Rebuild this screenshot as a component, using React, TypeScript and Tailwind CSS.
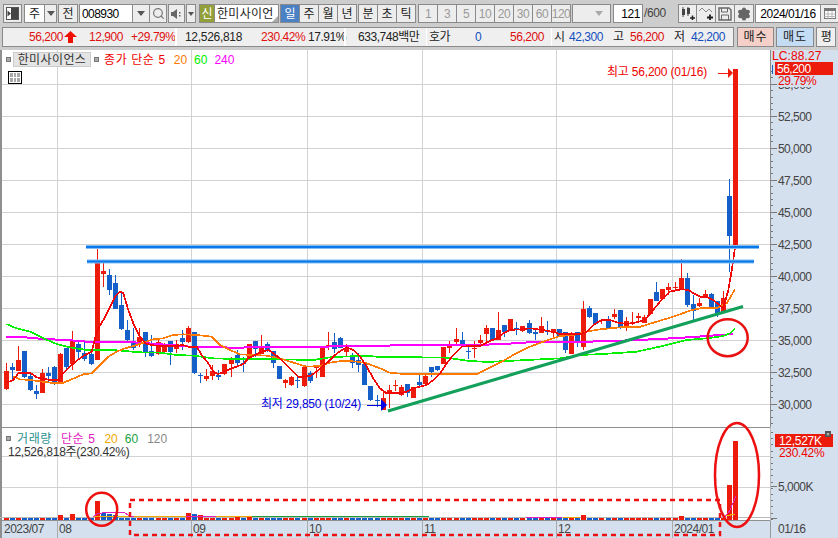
import { Search, Settings } from "lucide-react";

const RED = "#ec1b0b";
const BLUE = "#1460c8";

// candles read off the chart: x, body top, body bottom, wick top, wick bottom, r/b
type C = [number, number, number, number, number, string];

const z3: C[] = [
  [19,393,447,370,450,"r"],[37,381,389,370,420,"b"],[55,360,392,318,392,"r"],[73,333,410,333,415,"b"],
  [91,408,450,400,453,"b"],[109,453,461,435,476,"b"],[127,400,458,388,458,"r"],[145,400,408,380,425,"b"],
  [163,381,429,378,435,"b"],[181,342,429,340,433,"r"],[199,324,381,324,390,"b"],[217,300,372,273,390,"r"],
  [235,312,336,305,355,"b"],[253,339,357,300,362,"b"],[274,342,372,340,375,"b"],[292,70,360,28,360,"r"],
  [310,93,102,70,140,"r"],[328,105,150,88,165,"b"],[346,129,207,105,207,"b"],[364,195,267,155,270,"b"],
  [382,270,300,240,310,"b"],[400,303,324,264,330,"b"],[418,291,312,265,320,"r"],[436,276,336,276,352,"b"],
  [454,333,348,285,352,"b"],[475,306,342,300,345,"r"],[493,312,336,310,340,"r"],[511,303,336,303,375,"b"],
  [529,312,327,300,340,"r"],[547,294,306,270,330,"b"],[565,264,306,258,310,"r"],[583,276,400,276,402,"b"],
  [601,404,406,400,430,"b"],[619,408,416,388,422,"r"],[637,393,408,375,420,"r"],[655,405,410,390,420,"b"],
  [673,372,402,372,405,"r"],[694,357,372,350,410,"r"],[712,345,369,330,375,"b"],[730,369,371,350,395,"b"],
  [748,312,354,312,360,"r"],[766,303,326,303,352,"b"],[784,318,342,285,342,"r"],[802,312,330,305,335,"b"],
  [820,333,369,333,385,"b"],[838,378,417,378,417,"b"],
];
const z4: C[] = [
  [16,420,428,416,445,"r"],[34,411,435,408,437,"r"],[52,420,422,410,445,"b"],[72,381,438,381,440,"r"],
  [90,400,423,392,430,"b"],[108,380,384,380,415,"r"],[127,318,410,318,410,"r"],[145,315,318,277,330,"r"],
  [163,306,327,280,340,"b"],[181,294,324,290,325,"b"],[199,325,335,313,352,"r"],[217,345,369,338,385,"b"],
  [235,360,375,340,395,"b"],[253,372,435,372,435,"b"],[271,438,480,438,482,"b"],[292,480,482,465,500,"b"],
  [310,475,510,450,510,"r"],[328,450,460,435,503,"r"],[346,436,438,420,452,"r"],[364,441,465,435,467,"r"],
  [382,432,458,432,470,"b"],[400,441,473,441,473,"r"],[418,426,435,405,438,"b"],[436,408,432,400,435,"r"],
  [454,381,396,381,412,"b"],[472,378,390,378,392,"b"],[490,321,372,321,372,"r"],[508,318,324,302,340,"r"],
  [529,297,305,265,315,"r"],[547,300,318,277,322,"b"],[565,334,336,318,357,"b"],[583,324,326,303,355,"r"],
  [601,300,308,285,318,"r"],[619,264,282,255,315,"r"],[637,264,300,264,303,"b"],[655,270,300,216,300,"r"],
  [673,255,276,255,290,"b"],[691,237,270,237,272,"r"],[709,264,267,246,285,"b"],[727,259,272,259,275,"r"],
  [748,250,279,240,281,"b"],[766,276,281,265,300,"b"],[784,258,279,232,279,"r"],[802,270,276,243,285,"b"],
  [820,268,280,268,290,"r"],
];
const z5: C[] = [
  [-2,268,290,268,290,"b"],[16,277,330,277,340,"b"],[34,285,342,275,342,"r"],[52,276,305,276,320,"b"],
  [70,207,322,183,330,"r"],[88,204,230,197,235,"b"],[106,219,252,219,255,"b"],[124,240,243,240,252,"r"],
  [145,240,264,228,268,"b"],[163,223,231,208,238,"r"],[181,210,264,210,266,"b"],[199,243,264,232,272,"r"],
  [217,245,247,215,255,"r"],[235,228,234,220,245,"r"],[253,230,249,225,250,"r"],[271,177,222,177,224,"r"],
  [289,156,183,126,183,"b"],[307,147,177,147,180,"r"],[325,141,150,130,165,"r"],[346,141,145,125,150,"r"],
  [364,114,150,57,150,"r"],[382,114,195,99,200,"b"],[400,192,213,165,240,"b"],[418,189,198,175,200,"r"],
  [436,162,168,150,175,"r"],[454,162,204,160,205,"b"],[472,183,219,183,232,"b"],[490,174,215,152,215,"r"],
];
const candles: C[] = [
  ...z3.map(([x, a, b, c, d, k]): C => [Math.floor(x / 3), 240 + a / 3, 240 + b / 3, 240 + c / 3, 240 + d / 3, k]),
  ...z4.map(([x, a, b, c, d, k]): C => [280 + Math.floor(x / 3), 240 + a / 3, 240 + b / 3, 240 + c / 3, 240 + d / 3, k]),
  ...z5.map(([x, a, b, c, d, k]): C => [560 + Math.floor(x / 3), 240 + a / 3, 240 + b / 3, 240 + c / 3, 240 + d / 3, k]),
  [729, 196, 236, 179, 272, "b"],
  [735, 69, 248, 69, 250, "r"],
];

function pts(off: number, list: number[][]) {
  return list.map(([x, y]) => `${off + x / 3},${240 + y / 3}`).join(" ");
}

const ma5 = [
  pts(0, [[19,428],[40,420],[55,400],[75,398],[90,398],[110,412],[130,416],[150,420],[175,420],[190,400],[215,375],[235,358],[255,345],[275,335],[292,270],[310,240],[330,200],[345,170],[360,155],[370,160],[385,210],[400,250],[420,290],[436,310],[455,315],[475,318],[500,318],[530,318],[547,315],[565,320],[590,320],[605,345],[625,370],[640,395],[655,402],[675,395],[695,385],[715,378],[730,372],[745,355],[765,345],[785,335],[805,330],[820,340]]),
  pts(280, [[0,355],[20,375],[40,395],[55,410],[70,410],[90,408],[110,395],[125,380],[145,365],[165,345],[185,330],[200,322],[220,330],[240,350],[260,380],[280,415],[300,445],[320,460],[360,460],[380,455],[400,445],[420,440],[440,435],[460,420],[480,400],[500,370],[520,345],[545,320],[570,318],[600,318],[625,305],[650,295],[670,280],[690,270],[720,268],[750,265],[790,270],[830,278]]),
  pts(560, [[0,283],[30,283],[60,283],[80,275],[100,255],[125,240],[150,240],[175,248],[200,252],[225,248],[255,240],[275,215],[300,185],[330,155],[365,148],[385,150],[400,160],[420,170],[440,170],[460,180],[490,205],[505,150],[512,110],[520,60],[525,20],[528,0]]),
].join(" ");
const ma20 = [
  pts(0, [[40,410],[60,418],[90,420],[120,424],[150,428],[190,428],[215,418],[250,403],[275,400],[300,375],[325,350],[350,335],[375,325],[400,318],[430,308],[460,298],[490,295],[520,285],[550,283],[590,285],[635,290],[660,315],[690,330],[720,343],[760,345],[800,347]]),
  pts(280, [[0,355],[40,368],[80,380],[120,378],[150,368],[190,362],[230,365],[260,370],[300,385],[330,398],[370,402],[420,402],[500,402],[590,402],[610,392],[660,368],[700,345],[750,320],[790,305]]),
  pts(560, [[0,288],[40,285],[80,275],[120,268],[180,262],[235,262],[290,245],[340,230],[390,212],[420,205],[470,205],[500,190],[525,148]]),
].join(" ");
const ma60 = [
  pts(0, [[19,252],[50,265],[90,275],[130,295],[170,312],[210,322],[260,330],[340,330],[420,337],[480,338],[530,345],[580,347],[640,355],[700,357],[800,358]]),
  pts(280, [[0,358],[100,360],[150,352],[250,347],[290,350],[420,352],[500,353],[560,362],[620,366],[780,358]]),
  pts(560, [[0,355],[60,345],[130,342],[230,335],[290,322],[340,310],[380,300],[440,295],[490,288],[510,280],[525,265]]),
].join(" ");
const ma240 = [
  pts(0, [[19,290],[75,292],[130,297],[200,300],[260,305],[400,307],[470,312],[570,320],[700,323]]),
  pts(280, [[0,321],[120,320],[360,316],[560,316],[670,312],[760,306]]),
  pts(560, [[0,307],[160,303],[300,297],[400,291],[520,282]]),
].join(" ");

const gridX = [57, 191, 307, 422, 556, 672];
const gridY = [84, 116, 148, 180, 212, 244, 276, 308, 340, 372, 404];
const axisLabels = ["55,000", "52,500", "50,000", "47,500", "45,000", "42,500", "40,000", "37,500", "35,000", "32,500", "30,000"];

const volTall: Record<number, [number, string]> = {
  60: [515, "r"], 72: [514, "r"], 97: [501, "r"], 103: [513, "b"], 109: [514, "b"], 115: [515, "b"],
  188: [513, "r"], 194: [514, "b"], 200: [515, "r"], 237: [516, "r"], 249: [516, "r"],
  583: [515, "r"], 681: [516, "r"], 729: [485, "r"], 735: [441, "r"],
};

const numFont = "font-['Liberation_Sans','Noto_Sans_CJK_KR',sans-serif]";

function Btn({ className, tone = "justify-center bg-[#ededed] text-[#222]", children }: { className: string; tone?: string; children?: React.ReactNode }) {
  return (
    <div className={`flex h-[19px] shrink-0 items-center border border-[#8a8a8a] text-[12px] ${tone} ${className}`}>
      {children}
    </div>
  );
}

function Arrow() {
  return <span className="h-0 w-0 border-x-[4px] border-t-[5px] border-x-transparent border-t-[#555]" />;
}

function MainPlot() {
  return (
    <div className="relative h-[377px] w-[770px] shrink-0 bg-white">
      <svg width={770} height={377} viewBox="0 50 770 377" className="block">
        <g shapeRendering="crispEdges">
          {gridX.map(x => <rect key={x} x={x} y={50} width={1} height={377} fill="#d2d2d2" />)}
          {gridY.map(y => <rect key={y} x={0} y={y} width={770} height={1} fill="#d2d2d2" />)}
          <rect x={0} y={50} width={2} height={377} fill="#8f8f8f" />
          {candles.map(([x, t, b, wt, wb, k], i) => (
            <g key={i} fill={k === "r" ? RED : BLUE}>
              <rect x={x} y={wt} width={1} height={wb - wt} />
              <rect x={x - 2} y={t} width={5} height={Math.max(b - t, 1)} />
            </g>
          ))}
          <polyline points={ma240} fill="none" stroke="#ff00ff" strokeWidth={2} />
          <polyline points={ma60} fill="none" stroke="#00f000" strokeWidth={1.7} />
          <polyline points={ma20} fill="none" stroke="#ff7a00" strokeWidth={1.7} />
          <polyline points={ma5} fill="none" stroke="#f00808" strokeWidth={1.7} />
        </g>
        <line x1={86} y1={247} x2={759} y2={247} stroke="#7fbdf5" strokeWidth={4} />
        <line x1={86} y1={247} x2={759} y2={247} stroke="#0a78e8" strokeWidth={2.2} />
        <line x1={87} y1={261.5} x2={754} y2={261.5} stroke="#7fbdf5" strokeWidth={4} />
        <line x1={87} y1={261.5} x2={754} y2={261.5} stroke="#0a78e8" strokeWidth={2.2} />
        <line x1={388} y1={411} x2={743} y2={306.5} stroke="#12a05a" strokeWidth={3} />
        <ellipse cx={727.7} cy={337.7} rx={20} ry={18.5} fill="none" stroke="#e81010" strokeWidth={2.5} />
        <path d="M718 73H728" stroke={RED} strokeWidth={1} shapeRendering="crispEdges" />
        <path d="M728 68L733 73L728 78Z" fill={RED} />
        <path d="M367 405H382" stroke="#0000e0" strokeWidth={1} shapeRendering="crispEdges" />
        <path d="M381 399L387 405L381 411Z" fill="#0000e0" />
      </svg>

      {/* legend and price notes sit on top of the chart */}
      <div className={`absolute left-[6px] top-[2px] flex h-[15px] items-center text-[12px] ${numFont}`}>
        <span className="h-[5px] w-[5px] border border-[#777] bg-[#aaa]" />
        <span className="ml-[2px] flex h-[15px] w-[78px] items-center justify-center border border-[#ccc] bg-[#e4e4e4] tracking-[0.4px] text-[#333]">한미사이언스</span>
        <span className="ml-[3px] h-[5px] w-[5px] border border-[#777] bg-[#aaa]" />
        <span className="ml-[5px] tracking-[0.6px] text-[#f00000]">종가 단순 5</span>
        <span className="ml-[8px] text-[#ff7a00]">20</span>
        <span className="ml-[7px] text-[#00f000]">60</span>
        <span className="ml-[7px] text-[#ff00ff]">240</span>
      </div>
      <div className="absolute left-[8px] top-[21px] grid h-[13px] w-[14px] grid-cols-3 gap-px border border-black bg-white p-px">
        {[0, 1, 2, 3, 4, 5].map(i => <span key={i} className="bg-[#a8a8a8]" />)}
      </div>
      <span className={`absolute left-[607px] top-[15px] text-[12px] leading-[15px] tracking-[-0.2px] text-[#f00000] ${numFont}`}>최고 56,200 (01/16)</span>
      <span className={`absolute left-[261px] top-[347px] text-[12px] leading-[15px] tracking-[-0.2px] text-[#0000e0] ${numFont}`}>최저 29,850 (10/24)</span>
    </div>
  );
}

function MainAxis() {
  const minor: number[] = [];
  for (let y = 71; y < 427; y += 6.4) minor.push(Math.round(y));
  return (
    <div className={`relative h-[377px] w-[68px] shrink-0 border-l border-[#8a8a8a] bg-[#d5e0ee] ${numFont}`}>
      <svg width={67} height={377} viewBox="771 50 67 377" className="block">
        <g shapeRendering="crispEdges" fill="#777">
          {minor.map(y => <rect key={y} x={771} y={y} width={2} height={1} />)}
          {gridY.map(y => <rect key={y} x={771} y={y} width={6} height={1} />)}
        </g>
        {gridY.map((y, i) => (
          <text key={y} x={778} y={y + 5} fontSize={12} letterSpacing={-0.55} fill="#444">{axisLabels[i]}</text>
        ))}
        <rect x={772} y={65} width={1} height={9} fill={BLUE} />
      </svg>
      <span className="absolute left-[1px] top-0 text-[12px] leading-[13px] tracking-[0.1px] text-[#f00000]">LC:88.27</span>
      <span className="absolute left-[4px] top-[12px] flex h-[13px] w-[58px] items-center bg-[#ec1b0b] pl-[2px] text-[12px] tracking-[-0.5px] text-white">56,200</span>
      <span className="absolute left-[7px] top-[25px] h-[12px] bg-[#d5e0ee] pr-[1px] text-[12px] leading-[12px] tracking-[-0.4px] text-[#f00000]">29.79%</span>
    </div>
  );
}

function VolumePlot() {
  const bars: [number, string][] = candles.map(([x, , , , , k]) => [x, k]);
  return (
    <div className="relative h-[94px] w-[770px] shrink-0 border-y border-[#8f8f8f] bg-white">
      <svg width={770} height={92} viewBox="0 428 770 92" className="block">
        <g shapeRendering="crispEdges">
          {gridX.map(x => <rect key={x} x={x} y={428} width={1} height={92} fill="#d2d2d2" />)}
          <rect x={0} y={456} width={770} height={1} fill="#d2d2d2" />
          <rect x={0} y={487} width={770} height={1} fill="#d2d2d2" />
          <rect x={0} y={428} width={2} height={92} fill="#8f8f8f" />
          <rect x={0} y={517} width={770} height={1} fill="#b8b8b8" />
          {bars.map(([x, k], i) => {
            const tall = volTall[x];
            const top = tall ? tall[0] : 518;
            return <rect key={i} x={x - 2} y={top} width={5} height={520 - top} fill={(tall ? tall[1] : k) === "r" ? RED : BLUE} />;
          })}
          <rect x={93} y={516} width={146} height={1} fill="#f0a800" />
          <rect x={239} y={516} width={13} height={1} fill="#f0a800" />
          <rect x={252} y={516} width={177} height={1} fill="#18a040" />
          <rect x={186} y={516} width={30} height={1} fill="#e020c0" />
          <rect x={526} y={517} width={36} height={1} fill="#e020c0" />
          <rect x={563} y={517} width={17} height={1} fill="#f0a800" />
          <polyline points="93,517 97,514 107,512 123,512 130,516 134,517" fill="none" stroke="#e020c0" strokeWidth={1} />
          <polyline points="725,517 730,510 736,496" fill="none" stroke="#e020c0" strokeWidth={1} />
          <polyline points="726,516 735,514" fill="none" stroke="#f0a800" strokeWidth={1} />
        </g>
      </svg>
      <div className={`absolute left-[6px] top-[3px] flex h-[15px] items-center text-[12px] ${numFont}`}>
        <span className="h-[5px] w-[5px] border border-[#777] bg-[#aaa]" />
        <span className="ml-[6px] tracking-[0.6px] text-[#2a9090]">거래량</span>
        <span className="ml-[9px] tracking-[0.6px] text-[#e020c0]">단순 5</span>
        <span className="ml-[9px] text-[#f0a800]">20</span>
        <span className="ml-[7px] text-[#18a040]">60</span>
        <span className="ml-[9px] text-[#888]">120</span>
      </div>
      <span className={`absolute left-[8px] top-[17px] text-[12px] leading-[14px] tracking-[-0.25px] text-[#333] ${numFont}`}>12,526,818주(230.42%)</span>
    </div>
  );
}

function VolumeAxis() {
  const minor: number[] = [];
  for (let y = 432; y < 520; y += 6.2) minor.push(Math.round(y));
  return (
    <div className={`relative h-[94px] w-[68px] shrink-0 border-l border-[#b8b8b8] bg-[#d5e0ee] ${numFont}`}>
      <svg width={67} height={93} viewBox="771 427 67 93" className="block">
        <g shapeRendering="crispEdges" fill="#777">
          {minor.map(y => <rect key={y} x={771} y={y} width={2} height={1} />)}
          <rect x={771} y={486} width={6} height={1} />
          <rect x={771} y={518} width={6} height={1} />
        </g>
        <text x={778} y={491} fontSize={12} letterSpacing={-0.5} fill="#444">5,000K</text>
      </svg>
      <span className="absolute left-[4px] top-[7px] flex h-[13px] w-[58px] items-center bg-[#ec1b0b] pl-[4px] text-[12px] tracking-[-0.3px] text-white">12,527K</span>
      <span className="absolute left-[8px] top-[20px] text-[12px] leading-[12px] tracking-[-0.3px] text-[#f00000]">230.42%</span>
      <span className="absolute left-[54px] top-[4px] flex h-[6px] w-[6px] items-center justify-center bg-[#555] text-[5px] leading-none text-white">×</span>
    </div>
  );
}

export default function App() {
  const dim = "justify-center bg-[#ededed] tracking-[-0.5px] text-[#999]";
  return (
    <div className={`relative flex h-[538px] w-[838px] flex-col overflow-hidden bg-[#cdcdcd] ${numFont}`}>
      {/* toolbar */}
      <div className="flex h-[27px] items-start pl-[3px] pt-[4px]">
        <Btn className="w-[19px]">
          <svg width={13} height={13} viewBox="0 0 13 13">
            <rect x={0.5} y={0.5} width={12} height={12} fill="#fff" stroke="#555" />
            <rect x={5} y={1} width={7} height={11} fill="#444" />
            <path d="M5 6.5L1.5 3.5V9.5Z" fill="#444" />
          </svg>
        </Btn>
        <Btn className="ml-[2px] w-[21px]" tone="justify-center bg-white text-[#222]">주</Btn>
        <Btn className="w-[12px] border-l-0"><Arrow /></Btn>
        <Btn className="ml-[1px] w-[20px]">전</Btn>
        <Btn className="ml-[1px] w-[54px] pl-[2px] tracking-[-0.55px]" tone="justify-start bg-white text-black">008930</Btn>
        <Btn className="w-[17px] border-l-0"><Arrow /></Btn>
        <Btn className="w-[17px] border-l-0"><Search size={13} color="#777" strokeWidth={2.2} /></Btn>
        <Btn className="ml-[1px] w-[17px]">
          <svg width={11} height={12} viewBox="0 0 11 12">
            <path d="M0 4H2L6 1V11L2 8H0Z" fill="#666" />
            <rect x={8} y={4} width={1.5} height={1.5} fill="#666" />
            <rect x={8} y={7} width={1.5} height={1.5} fill="#666" />
          </svg>
        </Btn>
        <Btn className="ml-[1px] w-[10px]"><span className="h-0 w-0 border-x-[3px] border-t-[4px] border-x-transparent border-t-[#555]" /></Btn>
        <div className="ml-[3px] flex h-[19px] w-[16px] shrink-0 items-center justify-center border border-[#8a8a8a] bg-[#93a03a] text-[12px] text-white">신</div>
        <div className="relative flex h-[19px] w-[64px] shrink-0 items-center overflow-hidden border-y border-r border-[#8a8a8a] bg-white pl-[2px] text-[12px] tracking-[0.3px] text-[#222]">
          한미사이언
          <span className="absolute bottom-0 right-0 h-0 w-0 border-b-[6px] border-l-[6px] border-b-[#aaa] border-l-transparent" />
        </div>
        <Btn className="ml-[1px] w-[20px]" tone="justify-center bg-[#4a80c4] text-white">일</Btn>
        <Btn className="w-[19px] border-l-0">주</Btn>
        <Btn className="w-[19px] border-l-0">월</Btn>
        <Btn className="w-[19px] border-l-0">년</Btn>
        <Btn className="ml-[1px] w-[20px]">분</Btn>
        <Btn className="w-[19px] border-l-0">초</Btn>
        <Btn className="w-[19px] border-l-0">틱</Btn>
        <div className="ml-[2px] flex">
          {["1", "3", "5", "10", "20", "30", "60", "120"].map((t, i) => (
            <Btn key={t} tone={dim} className={i === 0 ? "w-[20px]" : "w-[19px] border-l-0"}>{t}</Btn>
          ))}
        </div>
        <Btn className="ml-[1px] w-[39px] pr-[7px]" tone="justify-end bg-[#ededed]"><span className="h-0 w-0 border-x-[4px] border-t-[5px] border-x-transparent border-t-[#aaa]" /></Btn>
        <Btn className="ml-[2px] w-[30px] pr-[2px] tracking-[-0.4px]" tone="justify-end bg-white text-black">121</Btn>
        <span className="ml-[1px] w-[34px] shrink-0 text-[12px] leading-[19px] tracking-[-0.4px] text-[#444]">/600</span>
        <Btn className="w-[19px]">
          <svg width={15} height={13} viewBox="0 0 15 13">
            <path d="M2 2H5V8H2ZM7 1H10V7H7Z" fill="#444" />
            <path d="M3 0V10M8 0V9" stroke="#444" />
            <path d="M10 11H15M12.5 8.500V13" stroke="#222" strokeWidth={1.5} />
          </svg>
        </Btn>
        <Btn className="w-[19px] border-l-0">
          <svg width={15} height={13} viewBox="0 0 15 13">
            <path d="M0 4L3 1L7 5L10 2L13 5" fill="none" stroke="#888" />
            <path d="M8 10.500H14M11 7.500V13" stroke="#222" strokeWidth={1.8} />
          </svg>
        </Btn>
        <Btn className="w-[19px] border-l-0">
          <svg width={14} height={14} viewBox="0 0 14 14">
            <path d="M1 1H11L13 3V13H1Z" fill="none" stroke="#666" strokeWidth={1.4} />
            <path d="M3.500 1V5H9.500V1M3.500 13V8H10.500V13" fill="none" stroke="#666" />
          </svg>
        </Btn>
        <Btn className="w-[19px] border-l-0"><Settings size={14} color="#666" fill="#666" strokeWidth={2.4} /></Btn>
        <Btn className="ml-[1px] w-[66px] tracking-[-0.45px]" tone="justify-center bg-white text-black">2024/01/16</Btn>
        <Btn className="w-[18px] border-l-0">
          <svg width={12} height={11} viewBox="0 0 12 11">
            <rect x={0.5} y={0.5} width={11} height={10} fill="#fff" stroke="#777" />
            <rect x={0} y={0} width={12} height={3} fill="#777" />
            <path d="M4 3V11M8 3V11M0 6H12M0 8.500H12" stroke="#aaa" strokeWidth={0.8} />
          </svg>
        </Btn>
      </div>

      {/* quote row */}
      <div className="flex h-[23px] items-start pl-[2px] text-[12px] leading-[19px] tracking-[-0.45px]">
        <div className="flex h-[20px] w-[732px] shrink-0 items-center border border-[#8a8a8a] bg-[#efefef]">
          <span className="w-[60px] text-right text-[#e01010]">56,200</span>
          <svg width={13} height={12} viewBox="0 0 13 12" className="ml-[1px]"><path d="M6.500 0L13 6H9V12H4V6H0Z" fill="#f01000" /></svg>
          <span className="ml-[12px] w-[36px] text-[#e01010]">12,900</span>
          <span className="ml-[6px] w-[42px] text-[#e01010]">+29.79%</span>
          <span className="ml-[2px] h-full w-[2px] bg-white" />
          <span className="ml-[8px] w-[60px] tracking-[-0.3px] text-[#222]">12,526,818</span>
          <span className="ml-[16px] w-[41px] text-[#e01010]">230.42%</span>
          <span className="ml-[6px] w-[36px] text-[#222]">17.91%</span>
          <span className="h-full w-[2px] bg-white" />
          <span className="ml-[12px] w-[68px] text-[#222]">633,748백만</span>
          <span className="h-full w-[1px] bg-white" />
          <span className="ml-[2px] w-[24px] text-[#222]">호가</span>
          <span className="ml-[22px] w-[8px] text-[#1450c0]">0</span>
          <span className="ml-[27px] w-[37px] text-[#e01010]">56,200</span>
          <span className="ml-[4px] h-full w-[1px] bg-white" />
          <span className="ml-[2px] w-[12px] text-[#222]">시</span>
          <span className="ml-[3px] w-[37px] text-[#1450c0]">42,300</span>
          <span className="ml-[7px] w-[12px] text-[#222]">고</span>
          <span className="ml-[5px] w-[37px] text-[#e01010]">56,200</span>
          <span className="ml-[7px] w-[12px] text-[#222]">저</span>
          <span className="ml-[5px] w-[37px] text-[#1450c0]">42,200</span>
        </div>
        <div className="ml-[3px] flex h-[20px] w-[37px] shrink-0 items-center justify-center border border-[#8a8a8a] bg-[#f4d0c8] tracking-[1px] text-[#222]">매수</div>
        <div className="ml-[2px] flex h-[20px] w-[38px] shrink-0 items-center justify-center border border-[#8a8a8a] bg-[#c4dcf4] tracking-[1px] text-[#222]">매도</div>
        <div className="ml-[2px] flex h-[20px] w-[20px] shrink-0 items-center justify-center border border-[#8a8a8a] bg-[#efefef] text-[#222]">평</div>
      </div>

      {/* chart */}
      <div className="flex">
        <MainPlot />
        <MainAxis />
      </div>
      <div className="flex">
        <VolumePlot />
        <VolumeAxis />
      </div>

      {/* time axis */}
      <div className="h-[17px] w-[838px] shrink-0 bg-[#d5e0ee]">
        <svg width={838} height={17} viewBox="0 521 838 17" className="block">
          <g shapeRendering="crispEdges">
            {gridX.map(x => <rect key={x} x={x} y={521} width={1} height={17} fill="#aaa" />)}
            <rect x={770} y={521} width={1} height={17} fill="#999" />
            <rect x={0} y={521} width={2} height={17} fill="#8f8f8f" />
          </g>
          {([["2023/07", 4], ["08", 59], ["09", 193], ["10", 309], ["11", 424], ["12", 558], ["2024/01", 674], ["01/16", 778]] as [string, number][]).map(([t, x]) => (
            <text key={t} x={x} y={533} fontSize={12} letterSpacing={-0.5} fill="#444">{t}</text>
          ))}
        </svg>
      </div>

      {/* hand-drawn marks that cross the panels */}
      <svg width={838} height={538} viewBox="0 0 838 538" className="pointer-events-none absolute left-0 top-0">
        <ellipse cx={101.700} cy={509.300} rx={15.500} ry={16.500} fill="none" stroke="#ee1010" strokeWidth={2.500} />
        <ellipse cx={737} cy={475} rx={22} ry={52} fill="none" stroke="#ee1010" strokeWidth={2.500} />
        <path d="M130 500H720V535H130Z" fill="none" stroke="#ee1010" strokeWidth={2.500} strokeDasharray="5 4" />
      </svg>
    </div>
  );
}
